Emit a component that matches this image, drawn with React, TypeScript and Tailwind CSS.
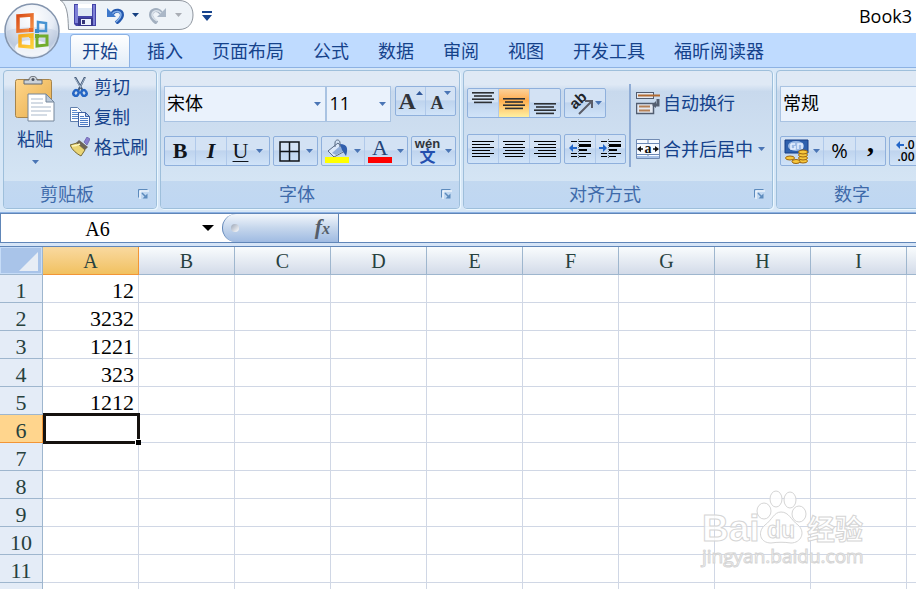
import type { ReactNode } from "react";

const TABS = ["开始", "插入", "页面布局", "公式", "数据", "审阅", "视图", "开发工具", "福昕阅读器"];
const COLUMNS = ["A", "B", "C", "D", "E", "F", "G", "H", "I", "J"];
const ROWS = [1, 2, 3, 4, 5, 6, 7, 8, 9, 10, 11, 12];
const VALUES: Record<number, string> = { 1: "12", 2: "3232", 3: "1221", 4: "323", 5: "1212" };

function Arrow({ className = "fill-[#4a75b5]" }: { className?: string }) {
  return (
    <svg viewBox="0 0 7 4" className={`h-1 w-[7px] shrink-0 ${className}`} aria-hidden="true">
      <path d="M0 0h7L3.5 4z" />
    </svg>
  );
}

function Launcher({ label }: { label: string }) {
  return (
    <button aria-label={label} className="flex w-[26px] items-center justify-center">
      <svg viewBox="0 0 11 11" className="size-[11px]" aria-hidden="true">
        <path d="M1 9V1h9" fill="none" stroke="#fff" transform="translate(1 1)" />
        <path d="M.5 8.500V.5h9" fill="none" stroke="#5d8bbd" />
        <path d="M4 4l4.500 4.500" stroke="#5d8bbd" strokeWidth="1.500" />
        <path d="M9.500 4.500v5h-5z" fill="#5d8bbd" />
      </svg>
    </button>
  );
}

function Group({ title, className, launcher = true, children }: { title: string; className: string; launcher?: boolean; children: ReactNode }) {
  return (
    <section
      aria-label={title}
      className={`flex shrink-0 flex-col overflow-hidden rounded border border-[#9ebfdb] bg-linear-to-b from-[#dfe9f5] from-10% via-[#c8d9ed] via-15% to-[#d8e8f6] shadow-[1px_1px_0_#eaf7ff] ${className}`}
    >
      <div className="h-[110px]">{children}</div>
      <div className="flex h-[27px] bg-linear-to-b from-[#c2d8f0] to-[#bfd7f2]">
        <h2 className="flex-1 text-center leading-[27px] text-[#3e6aaa]">{title}</h2>
        {launcher ? <Launcher label={`${title}设置`} /> : <span className="w-[26px]" />}
      </div>
    </section>
  );
}

function ButtonGroup({ children }: { children: ReactNode }) {
  return (
    <div className="flex h-[30px] divide-x divide-[#b0c9ea] overflow-hidden rounded-xs border border-[#8fb0dc] bg-linear-to-b from-[#d3e2f4] from-45% via-[#bfd4ee] via-50% to-[#d0e3f8]">
      {children}
    </div>
  );
}

function Tool({ label, className, children }: { label: string; className: string; children: ReactNode }) {
  return (
    <button aria-label={label} title={label} className={`flex items-center justify-center ${className}`}>
      {children}
    </button>
  );
}

function Picker({ label, value, className }: { label: string; value: string; className: string }) {
  return (
    <div className={`relative h-9 border border-[#a9c3e2] bg-[#eaf2fc] ${className}`}>
      <select aria-label={label} className="h-full w-full appearance-none bg-transparent pb-1 pl-[2px] text-lg leading-8 text-black outline-none">
        <option>{value}</option>
      </select>
      <span className="pointer-events-none absolute top-[15px] right-1">
        <Arrow />
      </span>
    </div>
  );
}

function Lines({ rows, top = 0, thick = false }: { rows: [number, number][]; top?: number; thick?: boolean }) {
  return (
    <svg viewBox="0 0 24 24" className="size-6" aria-hidden="true" shapeRendering={thick ? "auto" : "crispEdges"}>
      {rows.map(([x, w], i) => (
        <rect key={i} x={x} y={top + i * (thick ? 3.2 : 3)} width={w} height={thick ? 1.6 : 1} fill={thick ? "#2d3034" : "#000"} />
      ))}
    </svg>
  );
}

function OfficeLogo() {
  return (
    <button aria-label="Office 按钮" className="absolute top-[3px] left-1 z-10 size-14">
      <svg viewBox="0 0 56 56" aria-hidden="true">
        <defs>
          <radialGradient id="orb" cx=".5" cy=".25" r=".8">
            <stop offset="0" stopColor="#fff" />
            <stop offset=".5" stopColor="#e7edf6" />
            <stop offset=".75" stopColor="#c0cee2" />
            <stop offset="1" stopColor="#f6f9fd" />
          </radialGradient>
          <linearGradient id="red" x2="1" y2="1"><stop stopColor="#d84b16" /><stop offset="1" stopColor="#f79548" /></linearGradient>
          <linearGradient id="gold" x2="1" y2="1"><stop stopColor="#f9a51c" /><stop offset="1" stopColor="#ffd13b" /></linearGradient>
        </defs>
        <circle cx="28" cy="28" r="27" fill="url(#orb)" stroke="#8495ae" strokeWidth="1.500" />
        <path d="M3 28a25 25 0 0 0 50 0c-12-5-38-5-50 0z" fill="#b8c6dc" opacity=".4" />
        <ellipse cx="28" cy="45" rx="17" ry="8" fill="#fff" opacity=".75" />
        <path d="M14 13l14-1v15l-14 1z" fill="none" stroke="url(#red)" strokeWidth="3.500" />
        <path d="M34 19l8 1v8h-8z" fill="none" stroke="#4693d2" strokeWidth="2.500" />
        <path d="M16 33l12-1v12l-12-1z" fill="none" stroke="url(#gold)" strokeWidth="3.500" />
        <path d="M33 33h10v9l-10 1z" fill="none" stroke="#72ad2d" strokeWidth="3" />
        <path d="M25 25h4v4h-4z" fill="#ed6828" /><path d="M31 26h4v4h-4z" fill="#3b8dcf" />
        <path d="M25 31h4v4h-4z" fill="#f8ba25" /><path d="M31 31h4v4h-4z" fill="#6fa72a" />
      </svg>
    </button>
  );
}

function QuickAccess() {
  return (
    <div className="flex h-[33px] shrink-0 items-start pl-[60px]">
      <div className="relative h-[31px] w-[134px]">
        <svg viewBox="0 0 134 31" className="absolute inset-0" aria-hidden="true">
          <path d="M-1-1C7 4 8 13 8.500 29.500H119c9 0 14-6 14-14.500S128 .5 119 .5H0" fill="#eef3f8" stroke="#8f969f" />
        </svg>
        <div className="relative flex h-[29px] items-center pl-[14px]">
          <button aria-label="保存">
            <svg viewBox="0 0 22 22" className="size-[22px]" aria-hidden="true">
              <path d="M0 0h22v22H2l-2-2z" fill="#4444a8" />
              <path d="M1 1h3v18H1zM19 1h2v20h-2z" fill="#7d80d6" />
              <path d="M4 0h14v12H4z" fill="#dfe9f5" /><path d="M4 0h14v4H4z" fill="#fff" />
              <path d="M4 14h15v8H4z" fill="#35358b" /><path d="M7 15h10v6H7z" fill="#eaf0fc" /><path d="M8 16h3v4H8z" fill="#333478" />
            </svg>
          </button>
          <button aria-label="撤消" className="ml-[10px] flex items-center gap-2">
            <svg viewBox="0 0 18 18" className="size-[18px]" aria-hidden="true">
              <path d="M6 8c3-5 10-4 10 1 0 3-2 5-6 8" fill="none" stroke="#2458ae" strokeWidth="4" />
              <path d="M6 8c3-4 9-3 9 1 0 3-2 4-5 7" fill="none" stroke="#86b1ea" strokeWidth="1.500" />
              <path d="M1 2v9h9z" fill="#3e78cb" />
            </svg>
            <Arrow className="fill-[#153f80]" />
          </button>
          <button aria-label="恢复" className="ml-[10px] flex items-center gap-2">
            <svg viewBox="0 0 18 18" className="size-[18px]" aria-hidden="true">
              <path d="M12 7C8 2 2 4 2 9c0 3 2 5 6 8" fill="none" stroke="#a2afbf" strokeWidth="4" />
              <path d="M12 7C8 3 3 5 3 9c0 3 2 4 5 6" fill="none" stroke="#d9e1ea" strokeWidth="1.500" />
              <path d="M17 2v9H8z" fill="#aab7c7" />
            </svg>
            <Arrow className="fill-[#aaaeb5]" />
          </button>
        </div>
      </div>
      <button aria-label="自定义快速访问工具栏" className="mt-[11px] ml-2">
        <svg viewBox="0 0 10 10" className="size-[10px]" fill="#18448d" aria-hidden="true"><path d="M0 0h10v2H0zM0 4h10L5 10z" /></svg>
      </button>
      <h1 className="mt-[2px] mr-1 ml-auto text-lg leading-7 text-black">Book3</h1>
    </div>
  );
}

function PasteIcon() {
  return (
    <svg viewBox="0 0 40 46" className="h-[46px] w-10" aria-hidden="true">
      <defs><linearGradient id="board" x2="1" y2="1"><stop stopColor="#ffd68b" /><stop offset="1" stopColor="#e6ad4c" /></linearGradient></defs>
      <rect x=".5" y="3.500" width="36" height="38" rx="2" fill="url(#board)" stroke="#a6844c" />
      <path d="M9 8V4h5c0-5 8-5 8 0h5v4z" fill="#ccd2d9" stroke="#656b73" /><circle cx="18" cy="3.500" r="1.500" fill="#4b5360" />
      <path d="M13 18h18l8 8v19H13z" fill="#fff" stroke="#74869b" /><path d="M31 18v8h8z" fill="#bdcad9" stroke="#74869b" />
      <path d="M16 23h12M16 27h12M16 31h20M16 35h20M16 39h16" stroke="#aab9cb" />
    </svg>
  );
}

function ScissorsIcon() {
  return (
    <svg viewBox="0 0 20 20" className="size-5" aria-hidden="true">
      <path d="M5 0l8 14M15 0L8 14" stroke="#455c7a" strokeWidth="2" /><path d="M5 1l6 10M15 1l-5 9" stroke="#c7d6e8" strokeWidth=".7" />
      <ellipse cx="6" cy="16" rx="2.500" ry="3" transform="rotate(25 6 16)" fill="none" stroke="#2465c4" strokeWidth="2.500" />
      <ellipse cx="14" cy="16" rx="2.500" ry="3" transform="rotate(-25 14 16)" fill="none" stroke="#2465c4" strokeWidth="2.500" />
    </svg>
  );
}

function CopyIcon() {
  return (
    <svg viewBox="0 0 20 20" className="size-5" aria-hidden="true">
      <path d="M.5.5h7l4 4v10H.5z" fill="#fff" stroke="#607fad" /><path d="M2 3.500h5M2 5.500h7M2 7.500h7M2 9.500h7M2 11.500h7" stroke="#5e8bcd" />
      <path d="M8.500 5.500h7l4 4v10h-11z" fill="#f4f8ff" stroke="#3e60a1" /><path d="M15.500 5.500v4h4z" fill="#a9c4eb" stroke="#3e60a1" />
      <path d="M10 9.500h4M10 11.500h8M10 13.500h8M10 15.500h8M10 17.500h8" stroke="#4c7cc5" />
    </svg>
  );
}

function BrushIcon() {
  return (
    <svg viewBox="0 0 20 20" className="size-5" aria-hidden="true">
      <path d="M14 5l3-5 3 2-3 6z" fill="#8a80d0" stroke="#6259a4" strokeWidth=".7" />
      <path d="M9 3l9 7-3 3-9-7z" fill="#6c655a" />
      <path d="M7 6l8 7-4 6C7 17 2 13 0 8z" fill="#ead575" stroke="#776a38" /><path d="M2 9c4 0 6-1 8-2" stroke="#fff8bd" strokeWidth="1.500" />
    </svg>
  );
}

function PictureIcon({ kind }: { kind: "border" | "fill" | "orient" | "wrap" | "merge" | "money" }) {
  if (kind === "border")
    return <svg viewBox="0 0 21 21" className="size-[21px]" aria-hidden="true"><path d="M1 1h19v19H1zM10.500 1v19M1 10.500h19" fill="none" stroke="#101418" strokeWidth="1.500" /></svg>;
  if (kind === "fill")
    return (
      <svg viewBox="0 0 24 24" className="size-6" aria-hidden="true">
        <path d="M3 12L13 4l7 8-11 6z" fill="#dce8fa" stroke="#596b85" /><path d="M7 14l8-7 4 5-8 4z" fill="#91aeda" />
        <path d="M10 8V4c0-4 5-4 5 0v4" fill="none" stroke="#596b85" /><path d="M15 5c8 0 8 5 6 12l-4-6z" fill="#315fae" />
        <path d="M0 18h24v6H0z" fill="#ff0" />
      </svg>
    );
  if (kind === "orient")
    return (
      <svg viewBox="0 0 25 25" className="size-[25px]" aria-hidden="true">
        <text x="7" y="19" transform="rotate(-43 7 19)" fill="#20252b" fontFamily="Liberation Sans" fontSize="15" fontWeight="bold">ab</text>
        <path d="M11 23L23 11M17 10h7v7" fill="none" stroke="#5b5d68" strokeWidth="2" />
      </svg>
    );
  if (kind === "wrap")
    return (
      <svg viewBox="0 0 24 24" className="size-6" aria-hidden="true">
        <rect x=".5" y="1.500" width="17" height="6" fill="#e4e8f0" stroke="#505c70" /><path d="M2 4.500h22" stroke="#b06a32" strokeWidth="2" />
        <rect x=".5" y="12.500" width="17" height="10" fill="#e4e8f0" stroke="#505c70" strokeWidth="1.500" /><path d="M3 15.500h11M3 19.500h11" stroke="#b58055" strokeWidth="2" />
        <path d="M22 8v6h-3" fill="none" stroke="#535e70" strokeWidth="3" /><path d="M20 10v7l-4-3z" fill="#535e70" />
      </svg>
    );
  if (kind === "merge")
    return (
      <svg viewBox="0 0 24 20" className="h-5 w-6" aria-hidden="true">
        <path d="M.5.5h23v19H.5z" fill="#f6faff" stroke="#718bb3" /><path d="M.5 4.500h23M.5 15.500h23M12 0v5M12 15v5" stroke="#6b88b5" />
        <path d="M1 17h22v2H1z" fill="#a7c2e8" /><path d="M2 10h5M17 10h5" stroke="#111" strokeWidth="1.500" /><path d="M1 10l4-3v6zM23 10l-4-3v6z" fill="#111" />
        <text x="8.500" y="14" fill="#111" fontFamily="Liberation Serif" fontSize="14" fontWeight="bold">a</text>
      </svg>
    );
  return (
    <svg viewBox="0 0 25 25" className="size-[25px]" aria-hidden="true">
      <path d="M1 1h23v13H1z" fill="#2f61ad" stroke="#173f86" /><ellipse cx="12" cy="7" rx="8" ry="5" fill="#9dbbe5" />
      <path d="M7 5h4M7 5v5h4V7M14 10V5h4v5" fill="none" stroke="#e9f2ff" strokeWidth="1.500" />
      {[22, 19, 16, 13].map((y) => <ellipse key={y} cx="19" cy={y} rx="4.500" ry="2" fill="#f8c83d" stroke="#9a6410" />)}
      <ellipse cx="6" cy="19" rx="4.500" ry="2" fill="#f8c83d" stroke="#9a6410" /><ellipse cx="12" cy="22.500" rx="4" ry="2" fill="#f8c83d" stroke="#9a6410" />
    </svg>
  );
}

function IndentIcon({ increase = false }: { increase?: boolean }) {
  return (
    <svg viewBox="0 0 23 20" className="h-5 w-[23px]" aria-hidden="true">
      <path d="M2 2.500h6M10 2.500h12M2 14.500h6M10 14.500h12M2 17.500h6M10 17.500h7" stroke="#000" />
      <path d="M10 5h12v3H10zM10 10h8v2h-8z" fill="#000" /><path d="M9.500 0v20" stroke="#000" strokeDasharray="1 1" strokeOpacity=".5" />
      <path d={increase ? "M8 9L4 5v3H0v2h4v3z" : "M0 9l4-4v3h4v2H4v3z"} fill="#2467c9" />
    </svg>
  );
}

function Clipboard() {
  return (
    <Group title="剪贴板" className="w-[154px]">
      <div className="flex gap-3 pl-2">
        <button className="flex w-[46px] flex-col items-center pt-[5px] text-[#15428b]">
          <PasteIcon />
          <span className="mt-[3px] leading-7">粘贴</span>
          <span className="mt-[7px] flex"><Arrow /></span>
        </button>
        <div className="flex flex-col pt-[1px]">
          <button className="flex h-[30px] items-center gap-1 text-[#15428b]"><ScissorsIcon />剪切</button>
          <button className="flex h-[30px] items-center gap-1 text-[#15428b]"><CopyIcon />复制</button>
          <button className="flex h-[30px] items-center gap-1 text-[#15428b]"><BrushIcon />格式刷</button>
        </div>
      </div>
    </Group>
  );
}

function FontGroup() {
  return (
    <Group title="字体" className="w-[300px]">
      <div className="flex flex-col gap-[14px] px-[3px] pt-[15px]">
        <div className="flex h-9 items-start">
          <Picker label="字体名称" value="宋体" className="w-[163px]" />
          <Picker label="字号" value="11" className="mr-1 w-[65px]" />
          <ButtonGroup>
            <Tool label="增大字号" className="w-[30px]">
              <span className="font-['Liberation_Serif',serif] text-2xl leading-7 font-bold text-[#30343a]">A</span>
              <span className="self-start pt-1"><svg viewBox="0 0 7 4" className="h-1 w-[7px]" fill="#32599a"><path d="M0 4h7L3.500 0z" /></svg></span>
            </Tool>
            <Tool label="减小字号" className="w-[29px]">
              <span className="pt-1 font-['Liberation_Serif',serif] text-lg leading-6 font-bold text-[#30343a]">A</span>
              <span className="self-start pt-1"><Arrow /></span>
            </Tool>
          </ButtonGroup>
        </div>
        <div className="flex gap-[3px] font-['Liberation_Serif',serif] text-[22px] leading-7 text-[#10151c]">
          <ButtonGroup>
            <Tool label="加粗" className="w-[31px] font-bold"><span>B</span></Tool>
            <Tool label="倾斜" className="w-[31px] font-bold italic"><span>I</span></Tool>
            <Tool label="下划线" className="w-[42px] gap-2"><span className="underline decoration-1 underline-offset-3">U</span><Arrow /></Tool>
          </ButtonGroup>
          <ButtonGroup><Tool label="边框" className="w-[43px] gap-[6px]"><PictureIcon kind="border" /><Arrow /></Tool></ButtonGroup>
          <ButtonGroup>
            <Tool label="填充颜色" className="w-[43px] gap-[5px]"><PictureIcon kind="fill" /><Arrow /></Tool>
            <Tool label="字体颜色" className="w-[42px] gap-[5px]">
              <span className="flex w-6 flex-col items-center leading-[18px] text-[#234478]">A<span className="h-[6px] w-6 bg-[#ff0000]" /></span>
              <Arrow />
            </Tool>
          </ButtonGroup>
          <ButtonGroup>
            <Tool label="拼音指南" className="w-[43px] gap-[5px]">
              <span className="flex w-[25px] flex-col items-center font-['Liberation_Sans','Noto_Sans_CJK_SC',sans-serif] text-[13px] leading-3 font-bold text-[#30343a]">
                wén<span className="text-base leading-[14px] text-[#244fae]">文</span>
              </span>
              <Arrow />
            </Tool>
          </ButtonGroup>
        </div>
      </div>
    </Group>
  );
}

function Alignment() {
  const top: [number, number][] = [[1, 22], [3, 18], [1, 22], [3, 18]];
  const rows: [number, number][] = [[1, 22], [1, 18], [1, 22], [1, 18], [1, 22], [1, 18]];
  return (
    <Group title="对齐方式" className="w-[310px]">
      <div className="flex gap-[3px] px-[3px] pt-[13px]">
        <div className="flex flex-col gap-4 pt-1">
          <div className="flex gap-[3px]">
            <ButtonGroup>
              <Tool label="顶端对齐" className="w-[31px]"><Lines rows={top} top={1} thick /></Tool>
              <Tool label="垂直居中" className="w-[31px] bg-linear-to-b from-[#fbd19a] via-[#ffad4d] via-40% to-[#fff0a0]"><Lines rows={top} top={7} thick /></Tool>
              <Tool label="底端对齐" className="w-[30px]"><Lines rows={top} top={12} thick /></Tool>
            </ButtonGroup>
            <ButtonGroup><Tool label="方向" className="w-10 gap-[2px]"><PictureIcon kind="orient" /><Arrow /></Tool></ButtonGroup>
          </div>
          <div className="flex gap-[3px]">
            <ButtonGroup>
              <Tool label="左对齐" className="w-[31px]"><Lines rows={rows} top={4} /></Tool>
              <Tool label="居中" className="w-[31px]"><Lines rows={rows.map(([, w]) => [(24 - w) / 2, w])} top={4} /></Tool>
              <Tool label="右对齐" className="w-[30px]"><Lines rows={rows.map(([, w]) => [23 - w, w])} top={4} /></Tool>
            </ButtonGroup>
            <ButtonGroup>
              <Tool label="减少缩进量" className="w-[31px]"><IndentIcon /></Tool>
              <Tool label="增加缩进量" className="w-[29px]"><IndentIcon increase /></Tool>
            </ButtonGroup>
          </div>
        </div>
        <div className="h-[83px] w-[2px] bg-[#8facd5]" />
        <div className="flex flex-col gap-4 pt-1 pl-[2px] text-[#15428b]">
          <button className="flex h-[30px] items-center gap-[3px]"><PictureIcon kind="wrap" />自动换行</button>
          <button className="flex h-[30px] items-center gap-[3px]"><PictureIcon kind="merge" />合并后居中<span className="ml-[2px]"><Arrow /></span></button>
        </div>
      </div>
    </Group>
  );
}

function NumberGroup() {
  return (
    <Group title="数字" className="w-[178px]" launcher={false}>
      <div className="flex flex-col gap-[14px] px-[3px] pt-[15px]">
        <Picker label="数字格式" value="常规" className="w-full" />
        <div className="flex gap-[3px]">
          <ButtonGroup>
            <Tool label="会计数字格式" className="w-[43px] gap-1"><PictureIcon kind="money" /><Arrow /></Tool>
            <Tool label="百分比样式" className="w-8 font-['Open_Sans',sans-serif] text-xl text-black"><span>%</span></Tool>
            <Tool label="千位分隔样式" className="w-[29px] pb-4 font-['Liberation_Serif',serif] text-[28px] leading-3 font-bold text-black"><span>,</span></Tool>
          </ButtonGroup>
          <ButtonGroup>
            <Tool label="增加小数位数" className="w-[31px] font-['Open_Sans',sans-serif] text-xs leading-3 font-semibold text-black">
              <span className="flex flex-col text-right">
                <span className="flex items-center justify-end">
                  <svg viewBox="0 0 8 8" className="size-2" fill="#2467c9"><path d="M0 4l4-4v3h4v2H4v3z" /></svg>.0
                </span>
                <span>.00</span>
              </span>
            </Tool>
          </ButtonGroup>
        </div>
      </div>
    </Group>
  );
}

function FormulaBar() {
  return (
    <div className="flex h-[30px] shrink-0 border-y border-[#6086b8] bg-white">
      <div className="flex w-[222px] items-center border-l border-[#6086b8] pr-2">
        <input aria-label="名称框" defaultValue="A6" className="w-[193px] pt-[2px] text-center font-['Liberation_Serif',serif] text-xl text-black outline-none" />
        <button aria-label="名称列表" className="ml-2">
          <svg viewBox="0 0 12 6" className="h-[6px] w-3" aria-hidden="true"><path d="M0 0h12L6 6z" /></svg>
        </button>
      </div>
      <div className="flex w-[117px] items-center justify-between rounded-l-full border-r border-l border-[#6086b8] bg-linear-to-b from-[#f3f7fc] via-[#c5d6ec] to-[#9fbbe2] px-2">
        <span className="size-2 rounded-full bg-linear-to-br from-[#9ca7b8] to-white" />
        <button aria-label="插入函数" className="font-['Liberation_Serif',serif] text-[22px] leading-6 font-bold text-[#555d69] italic">f<span className="text-base">x</span></button>
      </div>
      <input aria-label="编辑栏" className="min-w-0 flex-1 outline-none" />
    </div>
  );
}

function Sheet() {
  return (
    <table className="w-[1003px] table-fixed border-separate border-spacing-0 font-['Liberation_Serif',serif] text-[22px] leading-[27px]">
      <colgroup>
        <col className="w-[43px]" />
        {COLUMNS.map((c) => <col key={c} className="w-24" />)}
      </colgroup>
      <thead>
        <tr className="h-7">
          <th className="border-r border-b border-[#9eb6ce] bg-[#a9c4e9] p-0">
            <button aria-label="全选" className="flex h-[27px] w-full items-end justify-end border border-[#c6dcf7] pr-[3px] pb-[2px]">
              <svg viewBox="0 0 19 19" className="size-[19px]" aria-hidden="true"><path d="M19 0v19H0z" fill="#e7edf5" /></svg>
            </button>
          </th>
          {COLUMNS.map((c) => (
            <th
              key={c}
              scope="col"
              className={`border-r border-b p-0 pt-[2px] text-xl leading-[25px] font-normal text-[#27413e] ${c === "A" ? "border-[#f29536] bg-linear-to-b from-[#f9d99f] to-[#f1c15f]" : "border-[#9eb6ce] bg-linear-to-b from-[#f9fcfd] to-[#d3dbe9]"}`}
            >
              {c}
            </th>
          ))}
        </tr>
      </thead>
      <tbody>
        {ROWS.map((r) => (
          <tr key={r} className="h-7">
            <th scope="row" className={`border-r border-b p-0 pt-1 leading-[23px] font-normal text-[#27413e] ${r === 6 ? "border-[#f29536] bg-[#ffd58d]" : "border-[#9eb6ce] bg-[#e4ecf7]"}`}>
              {r}
            </th>
            {COLUMNS.map((c) => (
              <td key={c} className="relative border-r border-b border-[#d0d7e5] bg-white p-0 pt-1 pr-1 text-right leading-[23px] text-black">
                {c === "A" ? VALUES[r] : null}
                {c === "A" && r === 6 && (
                  <span className="absolute -top-[2px] -right-[2px] -bottom-[2px] left-0 z-10 border-[3px] border-[#15120f]">
                    <span className="absolute -right-1 -bottom-1 size-[6px] border-t border-l border-white bg-black" />
                  </span>
                )}
              </td>
            ))}
          </tr>
        ))}
      </tbody>
    </table>
  );
}

function Watermark() {
  return (
    <svg viewBox="0 0 166 82" className="pointer-events-none absolute right-[50px] bottom-[18px] z-20 h-[82px] w-[166px]" fill="#ffffff" fillOpacity=".8" stroke="#d5d5d5" strokeWidth="1" aria-hidden="true">
      <text x="2" y="52" fontFamily="Liberation Sans" fontWeight="bold" fontSize="37">Bai</text>
      <ellipse cx="64" cy="22" rx="7" ry="8" /><ellipse cx="76" cy="10" rx="6" ry="8" />
      <ellipse cx="90" cy="11" rx="6" ry="8" /><ellipse cx="99" cy="25" rx="7" ry="8" />
      <path d="M81 23c8 0 10 8 17 13 8 7 3 18-7 18-7-1-13-1-20 0-11 0-14-11-6-18 7-5 9-13 16-13z" />
      <text x="67" y="49" fontFamily="Liberation Sans" fontWeight="bold" fontSize="23">du</text>
      <text x="107" y="51" fontFamily="Noto Sans CJK SC" fontWeight="bold" fontSize="28">经验</text>
      <text x="2" y="74" fontFamily="Open Sans" fontSize="19">jingyan.baidu.com</text>
    </svg>
  );
}

export default function App() {
  return (
    <main className="relative flex h-screen flex-col overflow-hidden bg-white font-['Open_Sans','Noto_Sans_CJK_SC',sans-serif] text-lg whitespace-nowrap">
      <OfficeLogo />
      <QuickAccess />
      <nav className="flex h-[34px] shrink-0 items-end gap-[5px] bg-[#bfdbff] pl-[70px]">
        {TABS.map((tab, i) => (
          <button
            key={tab}
            className={`h-[33px] rounded-t border px-[11px] pb-[2px] leading-8 text-[#15428b] ${i === 0 ? "border-b-0 border-[#8db2e3] bg-linear-to-b from-white to-[#e1ecf8]" : "border-transparent"}`}
          >
            {tab}
          </button>
        ))}
      </nav>
      <div className="flex shrink-0 gap-[3px] border-y border-[#8db2e3] bg-[#d7e7f7] pt-[2px] pb-[3px] pl-[3px]">
        <Clipboard />
        <FontGroup />
        <Alignment />
        <NumberGroup />
      </div>
      <FormulaBar />
      <div className="h-1 shrink-0 border-b border-[#6086b8] bg-[#d6e5f7]" />
      <div className="min-h-0 overflow-hidden">
        <Sheet />
      </div>
      <Watermark />
    </main>
  );
}
